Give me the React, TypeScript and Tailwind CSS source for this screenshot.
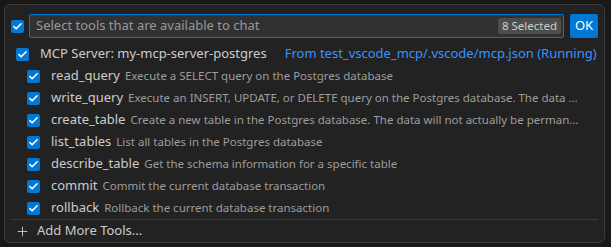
import { Check, Plus } from 'lucide-react';

const tools = [
  { name: 'read_query', desc: 'Execute a SELECT query on the Postgres database' },
  { name: 'write_query', desc: 'Execute an INSERT, UPDATE, or DELETE query on the Postgres database. The data will be modified' },
  { name: 'create_table', desc: 'Create a new table in the Postgres database. The data will not actually be permanently stored' },
  { name: 'list_tables', desc: 'List all tables in the Postgres database' },
  { name: 'describe_table', desc: 'Get the schema information for a specific table' },
  { name: 'commit', desc: 'Commit the current database transaction' },
  { name: 'rollback', desc: 'Rollback the current database transaction' },
];

function Checkbox() {
  return (
    <div className="flex h-[13px] w-[13px] shrink-0 items-center justify-center rounded-[2px] bg-[#0078d4]">
      <Check className="h-[11px] w-[11px] text-white" strokeWidth={3.5} />
    </div>
  );
}

export default function App() {
  return (
    <div
      className="h-[247px] w-[611px] overflow-hidden bg-[#181818] pl-[4px] pt-[4px]"
      style={{ fontFamily: '"Noto Sans", Roboto, sans-serif' }}
    >
      <div className="flex h-[239px] w-[601px] flex-col rounded-[6px] border border-[#3c3c3c] bg-[#222222]">
        {/* Header */}
        <div className="flex items-center pl-[6px] pr-[6px] pt-[9px]">
          <Checkbox />
          <div className="ml-[5px] flex h-[24px] w-[535px] items-center rounded-[2px] border border-[#0078d4] bg-[#313131] pl-[6px] pr-[2px]">
            <span className="flex-1 text-[13px] text-[#989898]">Select tools that are available to chat</span>
            <span className="rounded-[2px] bg-[#4d4d4d] px-[4px] text-[11.5px] leading-[16px] text-[#cccccc]">8 Selected</span>
          </div>
          <div className="ml-[6px] flex h-[24px] w-[28px] items-center justify-center rounded-[2px] bg-[#0078d4] text-[13px] text-white">
            OK
          </div>
        </div>

        {/* Server row */}
        <div className="mt-[5px] flex h-[22px] items-center pl-[11px] pr-[4px]">
          <Checkbox />
          <span className="ml-[11px] shrink-0 whitespace-nowrap text-[13px] text-[#cccccc]">
            MCP Server: my-mcp-server-postgres
          </span>
          <span className="ml-[18px] whitespace-nowrap text-[13px] text-[#3794ff]">
            From test_vscode_mcp/.vscode/mcp.json (Running)
          </span>
        </div>

        {/* Tools */}
        {tools.map((t) => (
          <div key={t.name} className="flex h-[22px] min-w-0 items-center pl-[22px] pr-[22px]">
            <Checkbox />
            <span className="ml-[11px] shrink-0 text-[13px] text-[#cccccc]">{t.name}</span>
            <span className="ml-[5px] min-w-0 truncate text-[11.5px] text-[#9d9d9d]">{t.desc}</span>
          </div>
        ))}

        <div className="mx-[6px] border-t border-[#3c3c3c]" />

        <div className="flex h-[22px] items-center pl-[10px]">
          <Plus className="h-[15px] w-[15px] text-[#cccccc]" strokeWidth={1.5} />
          <span className="ml-[7px] text-[13px] text-[#cccccc]">Add More Tools...</span>
        </div>
      </div>
    </div>
  );
}
